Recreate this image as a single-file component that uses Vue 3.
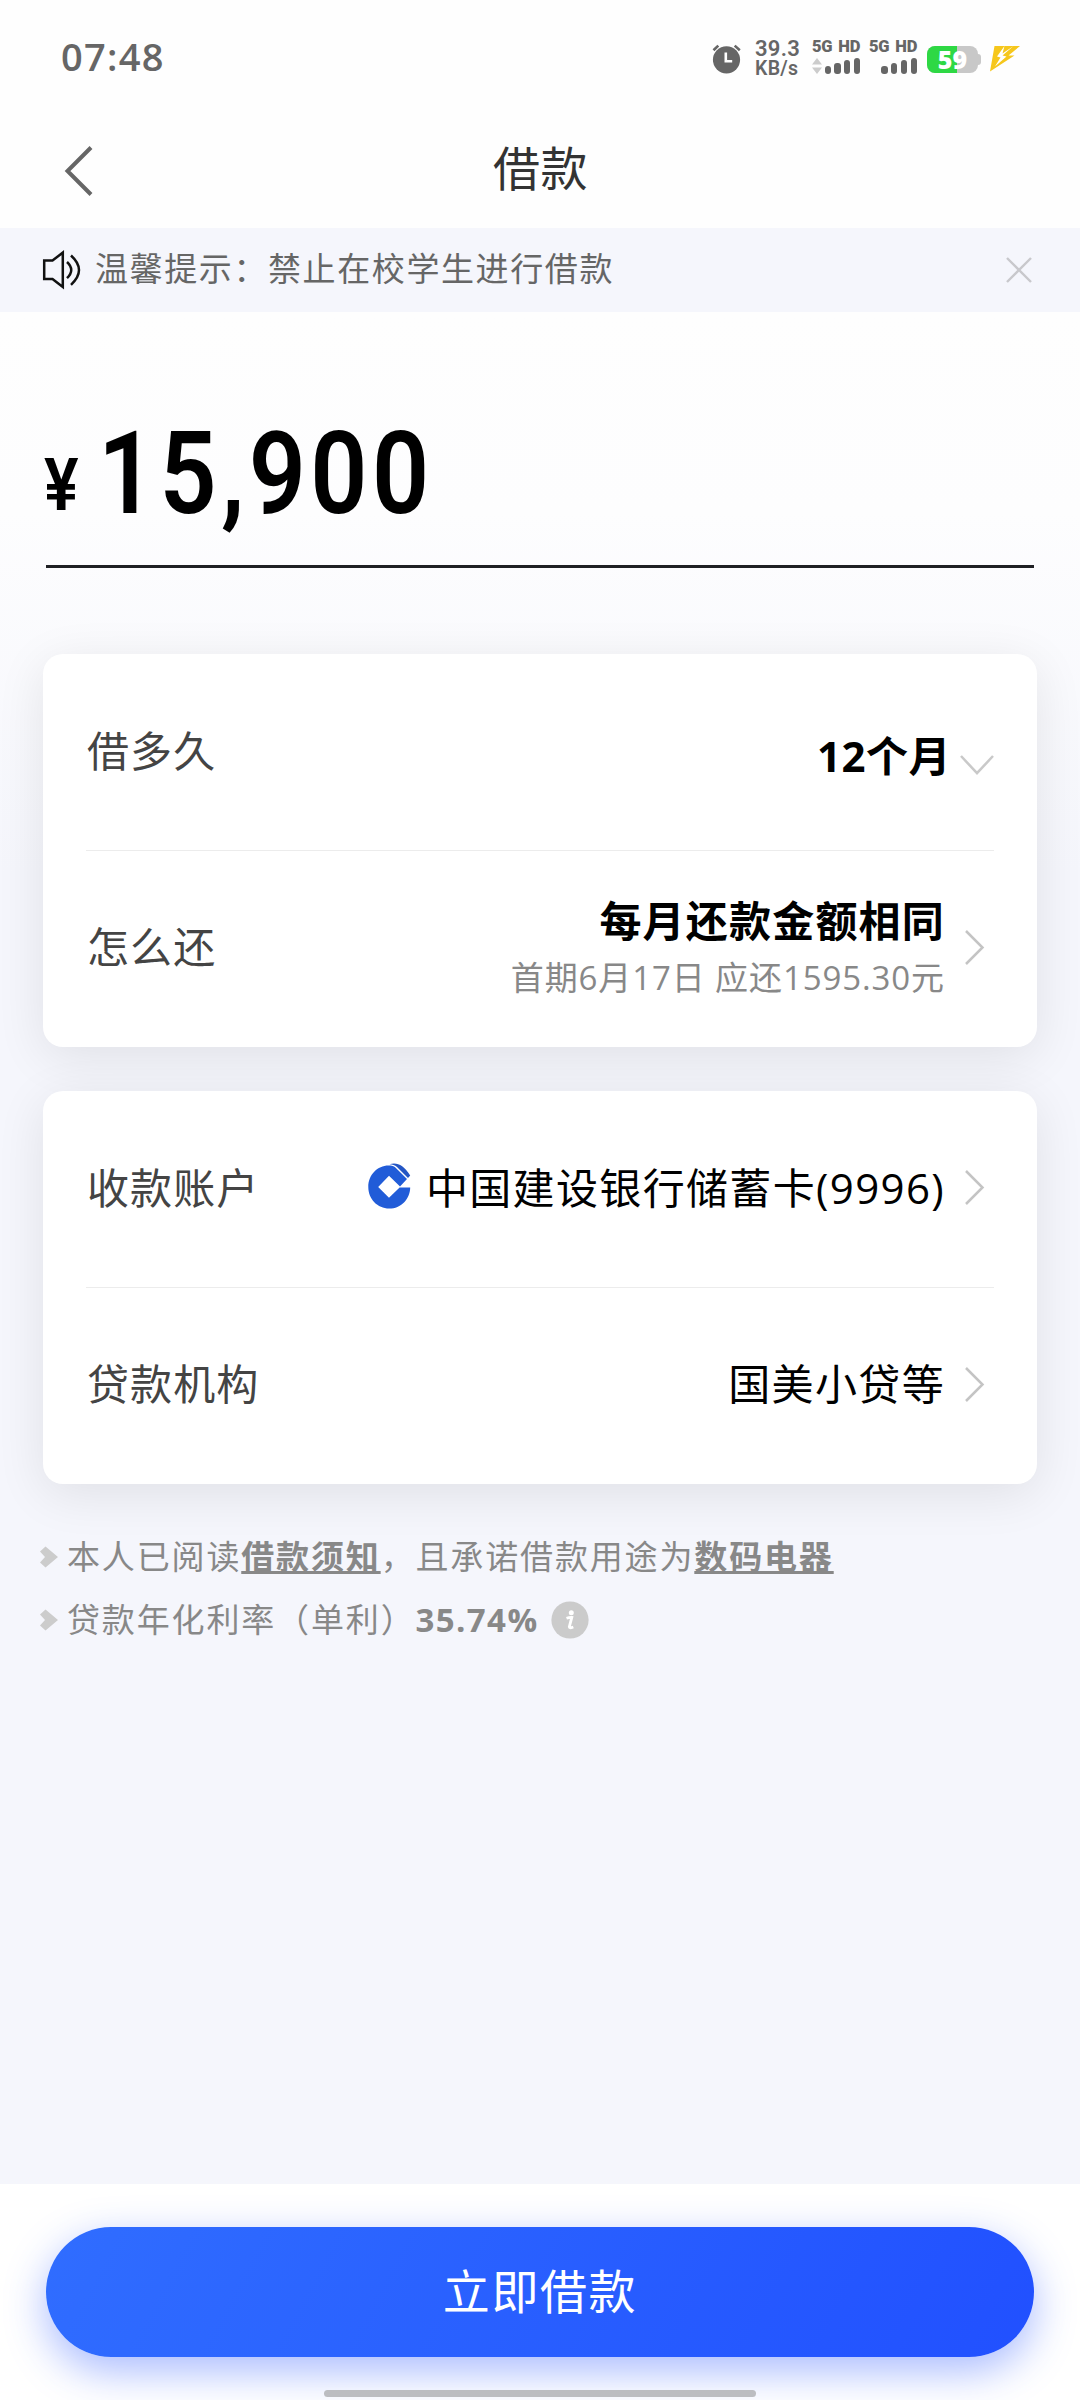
<script setup>
import { ref } from 'vue'

const netSpeed = ref({ valor: '39.3', unidade: 'KB/s' })
const battery = ref(59)
const showNotice = ref(true)
const amount = ref('15,900')

// barras de sinal: altura de cada uma em px
const signalBars = [8, 11, 14, 16]
</script>

<template>
  <div class="page">
    <div class="status-bar">
      <span class="clock">07:48</span>
      <div class="status-icons">
        <svg class="ic-alarm" viewBox="0 0 30 30">
          <circle cx="14.5" cy="15.8" r="13.6" fill="#666" />
          <path d="M1.5 6.2 L6.3 1.6 M22.7 1.6 L27.8 6.2" stroke="#666" stroke-width="2.6" fill="none" />
          <path d="M13.8 8.6 V17.3 H20.2" stroke="#fff" stroke-width="2.6" fill="none" />
        </svg>
        <div class="speed">
          <span class="speed-num">{{ netSpeed.valor }}</span>
          <span class="speed-unit">{{ netSpeed.unidade }}</span>
        </div>
        <div class="sim">
          <span class="sim-tag">5G HD</span>
          <div class="sim-row">
            <svg class="ic-updown" viewBox="0 0 10 16">
              <path d="M5 0 L10 6.5 H0 Z M0 9.5 H10 L5 16 Z" fill="#ccc" />
            </svg>
            <i v-for="h in signalBars" :key="h" class="bar" :style="{ height: h + 'px' }"></i>
          </div>
        </div>
        <div class="sim sim--two">
          <span class="sim-tag">5G HD</span>
          <div class="sim-row">
            <i v-for="h in signalBars" :key="h" class="bar" :style="{ height: h + 'px' }"></i>
          </div>
        </div>
        <div class="battery">
          <div class="battery-body">
            <div class="battery-fill" :style="{ width: battery + '%' }"></div>
            <span class="battery-num">{{ battery }}</span>
          </div>
          <i class="battery-nub"></i>
        </div>
        <svg class="ic-bolt" viewBox="0 0 30 26">
          <path d="M4.5 0 H30 L18.5 9.5 H24.5 L0 25.5 Z" fill="#f6c71c" />
          <path d="M14.5 0 L7 10.5 L10.5 11.5 L5 20.5 L16.5 10.5 L12.5 9.5 L23.5 0 L12.5 7.5 Z" fill="#fff" />
        </svg>
      </div>
    </div>

    <header class="nav">
      <svg class="ic-back" viewBox="0 0 28 50">
        <path d="M26 1.5 L2.5 25 L26 48.5" stroke="#666" stroke-width="4" fill="none" />
      </svg>
      <h1>借款</h1>
    </header>

    <div v-if="showNotice" class="notice">
      <svg class="ic-sound" viewBox="0 0 38 38">
        <path d="M1.2 9.6 H9.5 L19.8 1.6 V36 L9.5 28 H1.2 Z" stroke="#111" stroke-width="2.5" fill="none" />
        <path d="M24 11 Q32.5 19 24 27.2 M28 4.5 Q44 19 28 33.8" stroke="#111" stroke-width="2.5" fill="none" />
      </svg>
      <span class="notice-text">温馨提示：禁止在校学生进行借款</span>
      <svg class="ic-close" viewBox="0 0 26 26" @click="showNotice = false">
        <path d="M1 1 L25 25 M25 1 L1 25" stroke="#c8c8cc" stroke-width="2.4" />
      </svg>
    </div>

    <main class="content">
      <div class="amount">
        <span class="yen">¥</span>
        <span class="amount-num">{{ amount }}</span>
      </div>

      <section class="card">
        <div class="row">
          <span class="label">借多久</span>
          <strong class="value value--term">12个月</strong>
          <svg class="ic-down" viewBox="0 0 34 20">
            <path d="M1 1 L17 18.2 L33 1" stroke="#c9c9c9" stroke-width="2.5" fill="none" />
          </svg>
        </div>
        <div class="row">
          <span class="label">怎么还</span>
          <div class="plan">
            <strong class="value">每月还款金额相同</strong>
            <span class="plan-sub">首期6月17日 应还1595.30元</span>
          </div>
          <svg class="ic-right" viewBox="0 0 19 35">
            <path d="M1 1 L17.5 17.5 L1 34" stroke="#c4c4c4" stroke-width="2.5" fill="none" />
          </svg>
        </div>
      </section>

      <section class="card">
        <div class="row">
          <span class="label">收款账户</span>
          <svg class="ic-bank" viewBox="0 0 43 46">
            <path d="M20.5 2.6 C24 2.6 25.6 3.2 27.4 4.4 L39 16 L32 23.5 L21 12.8 L10.2 24 L21 34.8 L31.6 24.4 H42.2 C42 36 33 45.5 21.3 45.5 C9.5 45.5 0.3 36 0.3 24 C0.3 12 9.5 2.6 20.5 2.6 Z" fill="#215cd8" />
            <path d="M21.6 1.3 C29 -1 35.5 2.2 42.2 12.4 L40 15 L29 4 C27 2.2 24.3 1.3 21.6 1.3 Z" fill="#2456c4" />
          </svg>
          <span class="value value--plain">中国建设银行储蓄卡(9996)</span>
          <svg class="ic-right" viewBox="0 0 19 35">
            <path d="M1 1 L17.5 17.5 L1 34" stroke="#c4c4c4" stroke-width="2.5" fill="none" />
          </svg>
        </div>
        <div class="row">
          <span class="label">贷款机构</span>
          <span class="value value--plain">国美小贷等</span>
          <svg class="ic-right" viewBox="0 0 19 35">
            <path d="M1 1 L17.5 17.5 L1 34" stroke="#c4c4c4" stroke-width="2.5" fill="none" />
          </svg>
        </div>
      </section>

      <ul class="terms">
        <li>
          <svg class="ic-bullet" viewBox="0 0 18 22">
            <path d="M0 5.5 L5.5 0.5 L18 11 L5.5 21.5 L0 16.5 L5 11 Z" fill="#ccc" />
          </svg>
          <span class="term-text">本人已阅读<b class="link">借款须知</b>，且承诺借款用途为<b class="link">数码电器</b></span>
        </li>
        <li>
          <svg class="ic-bullet" viewBox="0 0 18 22">
            <path d="M0 5.5 L5.5 0.5 L18 11 L5.5 21.5 L0 16.5 L5 11 Z" fill="#ccc" />
          </svg>
          <span class="term-text">贷款年化利率（单利）<b class="rate">35.74%</b></span>
          <svg class="ic-info" viewBox="0 0 38 38">
            <circle cx="19" cy="19" r="18.6" fill="#cbcbcb" />
            <circle cx="20.3" cy="11.8" r="2.5" fill="#fff" />
            <path d="M15.5 17.3 Q18.5 16.2 20.8 16.4 L18.3 26 Q18.4 27.5 22.3 26" stroke="#fff" stroke-width="2.8" fill="none" />
          </svg>
        </li>
      </ul>
    </main>

    <footer class="footer">
      <button class="submit">立即借款</button>
      <i class="home-bar"></i>
    </footer>
  </div>
</template>

<style>
body { background: #fefefe; }
</style>

<style scoped>
.page {
  width: 1080px; height: 2400px;
  display: flex; flex-direction: column;
  background: #fefefe; overflow: hidden;
  font-family: "Open Sans", "Noto Sans CJK SC", sans-serif;
  color: #000;
}
.page svg { display: block; flex: none; overflow: visible; }

.status-bar {
  height: 114px; flex: none;
  display: flex; justify-content: space-between;
  padding: 0 60px 0 61px;
}
.clock {
  font-size: 38px; font-weight: 600; color: #666;
  line-height: 52px; margin-top: 30px; letter-spacing: 1.3px;
}
.status-icons { display: flex; align-items: flex-start; }
.ic-alarm { width: 30px; height: 30px; margin: 44px 13px 0 0; }
.speed {
  width: 45px; margin: 39px 12px 0 0;
  display: flex; flex-direction: column;
  font-family: "Roboto", sans-serif;
  color: #666; line-height: 20px; white-space: nowrap;
}
.speed-num { font-size: 22px; font-weight: 600; letter-spacing: 0.3px; }
.speed-unit { font-size: 19.5px; font-weight: 600; letter-spacing: 0.3px; }
.sim { width: 48px; margin: 40px 9px 0 0; color: #666; }
.sim-tag {
  display: block; white-space: nowrap;
  font-family: "Roboto", sans-serif; font-size: 16.5px; font-weight: 900;
  line-height: 14px; word-spacing: 2px; letter-spacing: -0.2px;
}
.sim-row { display: flex; align-items: flex-end; justify-content: flex-end; gap: 3.6px; height: 20px; }
.ic-updown { width: 10px; height: 16px; margin-right: -1px; }
.bar { width: 6.2px; border-radius: 3px; background: #666; }
.battery { display: flex; align-items: center; margin: 46px 9px 0 1px; }
.battery-body {
  width: 51px; height: 27px; border-radius: 8px;
  background: #c8c8c8;
  display: grid; grid-template-rows: 27px;
}
.battery-fill { grid-area: 1 / 1; background: #2ed844; border-radius: 8px 0 0 8px; }
.battery-num {
  grid-area: 1 / 1; text-align: center;
  font-size: 25px; font-weight: 800; color: #fff; line-height: 26px;
}
.battery-nub { width: 3px; height: 11px; border-radius: 0 3px 3px 0; background: #c8c8c8; }
.ic-bolt { width: 30px; height: 26px; margin-top: 46px; }

.nav {
  height: 114px; flex: none;
  display: grid; grid-template-columns: 200px 1fr 200px; align-items: center;
}
.ic-back { width: 28px; height: 50px; margin: 0 0 1px 65px; }
.nav h1 {
  margin: 0 0 6px 1px; text-align: center;
  font-size: 47px; font-weight: 400; color: #333; line-height: 64px; letter-spacing: 0.6px;
}

.notice {
  height: 84px; flex: none;
  display: flex; align-items: center;
  padding: 0 48px 0 43px; background: #f5f6fc;
}
.ic-sound { width: 38px; height: 38px; margin-right: 14px; }
.notice-text {
  flex: 1; font-size: 33px; letter-spacing: 1.6px; color: #666; line-height: 44px;
  margin-bottom: 3px;
}
.ic-close { width: 26px; height: 26px; }

.content {
  flex: 1; padding: 0 43px;
  background: linear-gradient(#fefefe 0, #fdfdfe 200px, #f5f6fc 560px);
}

.amount {
  height: 256px; box-sizing: border-box; margin: 0 3px;
  border-bottom: 3px solid #1f2024;
  display: flex; font-family: "Roboto", sans-serif; font-weight: 600;
  white-space: nowrap;
}
.yen {
  font-size: 72px; line-height: 84px; margin: 132px 2px 0 -2px; width: 52px;
  transform: scaleX(0.9); transform-origin: 0 50%;
}
.amount-num {
  font-size: 115px; line-height: 136px; margin-top: 94px;
  letter-spacing: 5px; transform: scaleX(0.87); transform-origin: 0 50%;
}

.card {
  background: #fff; border-radius: 20px;
  padding: 0 43px; height: 393px;
  box-shadow: 0 10px 50px rgba(0, 0, 0, 0.09);
}
.amount + .card { margin-top: 86px; }
.card + .card { margin-top: 44px; }
.row {
  height: 196px; box-sizing: border-box;
  display: flex; align-items: center;
}
.row + .row { border-top: 1px solid #ececec; }
.label {
  flex: 1; font-size: 42px; letter-spacing: 1.1px; color: #444; line-height: 58px;
  padding-left: 1px; margin-bottom: 3px;
}
.value { font-size: 42px; letter-spacing: 1.2px; line-height: 58px; white-space: nowrap; margin-right: -2px; }
.value--plain { margin-bottom: 3px; letter-spacing: 1.35px; }
.value--term { margin-top: 8px; letter-spacing: 0.5px; margin-right: -4px; }
.ic-down { width: 34px; height: 20px; margin: 25px 0 0 13px; }
.plan { display: flex; flex-direction: column; align-items: flex-end; margin-top: 1px; }
.plan-sub { font-size: 33px; letter-spacing: 0.9px; line-height: 56px; color: #888; margin-right: -2px; }
.ic-right { width: 19px; height: 35px; margin: 0 10px 3px 22px; }
.ic-bank { width: 43px; height: 46px; margin: 0 15px 6px 0; }

.terms {
  list-style: none; margin: 41px 0 0 -3px; padding: 0;
  font-size: 33px; letter-spacing: 1.85px; color: #888;
}
.terms li { display: flex; align-items: center; height: 63px; white-space: nowrap; }
.ic-bullet { width: 18px; height: 22px; margin-right: 9px; }
.term-text { margin-bottom: 3px; }
.terms b { font-weight: 700; }
.link { text-decoration: underline; text-decoration-thickness: 3px; text-underline-offset: 2px; text-decoration-skip-ink: none; }
.terms .rate { letter-spacing: 1.4px; }
.ic-info { width: 38px; height: 38px; margin-left: 12px; }

.footer {
  height: 216px; flex: none; box-sizing: border-box;
  padding: 43px 46px 0; background: #fff;
  display: flex; flex-direction: column; align-items: center;
}
.submit {
  width: 100%; height: 130px; border: none; border-radius: 65px; padding: 0 0 7px;
  background: linear-gradient(118deg, #306dff, #2150ff);
  box-shadow: 0 14px 42px rgba(40, 85, 255, 0.4);
  font-family: inherit; font-size: 47px; letter-spacing: 1.6px; color: #fff;
}
.home-bar { width: 432px; height: 7px; border-radius: 4px; margin-top: 33px; background: #bcbdc1; position: relative; }
</style>
